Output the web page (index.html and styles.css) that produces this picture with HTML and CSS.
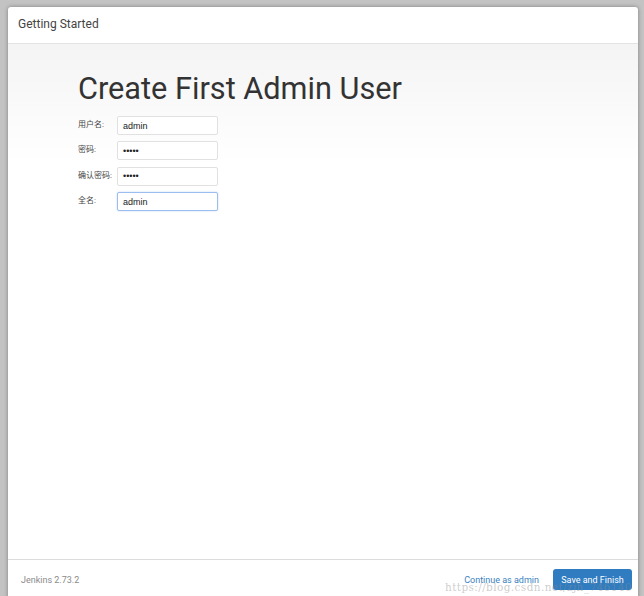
FILE: index.html
```html
<!DOCTYPE html>
<html lang="zh-CN">
<head>
    <meta charset="UTF-8">
    <meta name="viewport" content="width=device-width, initial-scale=1.0">
    <title>Getting Started</title>
    <link rel="stylesheet" href="styles.css">
</head>
<body>
    <!-- 安装向导对话框 -->
    <div class="modal">
        <div class="modal-header">Getting Started</div>

        <div class="modal-body">
            <h1 class="title">Create First Admin User</h1>
            <div class="form">
                <div class="row">
                    <label>用户名:</label>
                    <input class="field" type="text" value="admin">
                </div>
                <div class="row">
                    <label>密码:</label>
                    <input class="field" type="password" value="admin">
                </div>
                <div class="row">
                    <label>确认密码:</label>
                    <input class="field" type="password" value="admin">
                </div>
                <div class="row">
                    <label>全名:</label>
                    <input class="field focus" type="text" value="admin">
                </div>
            </div>
        </div>

        <div class="modal-footer">
            <span class="version">Jenkins 2.73.2</span>
            <div class="actions">
                <a class="link" href="#">Continue as admin</a>
                <button class="btn">Save and Finish</button>
            </div>
        </div>
    </div>
    <span class="watermark">https://blog.csdn.net/zjh_746140</span>
</body>
</html>
```

FILE: styles.css
```css
html, body{
    margin: 0;
    height: 100%;
}
body{
    background-color: #c3c3c3;
    font-family: Roboto, "Noto Sans CJK SC", sans-serif;
    overflow: hidden;
}
.modal{
    display: flex;
    flex-direction: column;
    margin: 7px 0 0 8px;
    width: 630px;
    height: 600px;
    background-color: #fff;
    border-radius: 3px 3px 0 0;
    box-shadow: 0 0 4px rgba(0, 0, 0, 0.35);
}
.modal-header{
    height: 37px;
    line-height: 34px;
    padding-left: 10px;
    font-size: 12px;
    color: #444;
    border-bottom: 1px solid #e3e3e3;
    box-sizing: border-box;
}
.modal-body{
    flex: 0 0 515px;
    padding-left: 70px;
    background: linear-gradient(#f4f4f4, #fff 120px);
    border-bottom: 1px solid #dcdcdc;
}
.title{
    margin: 26px 0 8px;
    font-size: 30.7px;
    font-weight: 400;
    line-height: 38px;
    color: #333;
}
.form{
    display: flex;
    flex-direction: column;
    gap: 6.4px;
}
.row{
    display: flex;
    align-items: center;
}
.row label{
    width: 39px;
    font-size: 8px;
    color: #444;
    padding-bottom: 4px;
}
.field{
    width: 101px;
    height: 19px;
    box-sizing: border-box;
    padding: 0 5px;
    border: 1px solid #e1e1e1;
    border-radius: 2px;
    font-family: "Liberation Sans", sans-serif;
    font-size: 9px;
    color: #222;
    background: #fff;
    outline: none;
}
.field.focus{
    border-color: #9bbdf0;
    box-shadow: 0 0 2px rgba(100, 150, 230, 0.4);
}
.modal-footer{
    display: flex;
    align-items: center;
    justify-content: space-between;
    height: 37px;
    padding: 1px 6px 0 13px;
}
.version{
    font-size: 9px;
    color: #8a8a8a;
}
.actions{
    display: flex;
    align-items: center;
    gap: 14px;
}
.link{
    font-size: 9px;
    color: #3b7fc0;
    text-decoration: none;
}
.btn{
    width: 79px;
    height: 21px;
    border: none;
    border-radius: 3px;
    background-color: #2f7cc0;
    color: #fff;
    font-family: Roboto, sans-serif;
    font-size: 9px;
    padding: 0;
}
.watermark{
    position: absolute;
    left: 445px;
    top: 581px;
    font-family: "DejaVu Serif", serif;
    font-size: 10.5px;
    letter-spacing: 0.4px;
    color: rgba(140, 140, 140, 0.45);
    white-space: nowrap;
}
```
